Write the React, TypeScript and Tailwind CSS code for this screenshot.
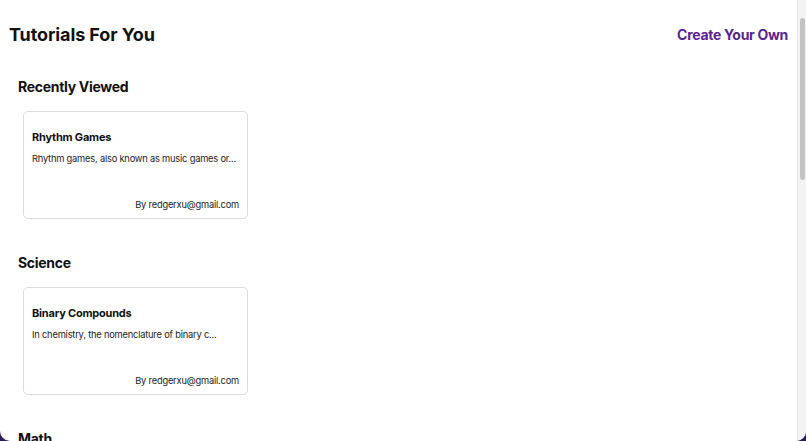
import React from 'react';

interface Tutorial {
  title: string;
  summary: string;
  author: string;
}

const sections: { name: string; items: Tutorial[] }[] = [
  {
    name: 'Recently Viewed',
    items: [
      {
        title: 'Rhythm Games',
        summary: 'Rhythm games, also known as music games or rhythm action games, are a genre of music-themed video games',
        author: 'redgerxu@gmail.com',
      },
    ],
  },
  {
    name: 'Science',
    items: [
      {
        title: 'Binary Compounds',
        summary: 'In chemistry, the nomenclature of binary compounds follows a set of rules',
        author: 'redgerxu@gmail.com',
      },
    ],
  },
  {
    name: 'Math',
    items: [
      {
        title: 'Quadratic Equations',
        summary: 'A quadratic equation is any equation that can be rearranged in standard form',
        author: 'redgerxu@gmail.com',
      },
    ],
  },
];

// previews are cut to a fixed number of characters
const preview = (text: string, max = 42) => (text.length > max ? text.slice(0, max) + '...' : text);

const TutorialCard: React.FC<{ tutorial: Tutorial }> = ({ tutorial }) => (
  <div className="ml-[5px] w-[225px] h-[108px] border-[1.5px] border-[#dcdcdc] rounded-[5px] bg-white px-[8px] pt-[18px] pb-[6.5px] flex flex-col">
    <div className="text-[11px] font-bold leading-[15px] tracking-[-0.2px] text-[#111]">{tutorial.title}</div>
    <div className="mt-[6.5px] text-[9.3px] leading-[14px] tracking-[-0.2px] text-[#222] whitespace-nowrap">
      {preview(tutorial.summary)}
    </div>
    <div className="mt-auto text-right text-[9.3px] leading-[14px] tracking-[-0.2px] text-[#222]">By {tutorial.author}</div>
  </div>
);

export default function App() {
  return (
    <div className="w-[806px] h-[441px] bg-[#2a1b5a] overflow-hidden" style={{ fontFamily: 'Inter, "Noto Sans", sans-serif' }}>
      <div className="h-full bg-white rounded-b-[10px] overflow-hidden flex">
        <div className="flex-1 min-w-0 flex flex-col">
          <div className="h-[3px] bg-[#1d78cc]" />
          <div className="flex items-center justify-between pl-[9px] pr-[9px] pt-[24px] h-[49px]">
            <h1 className="text-[18px] font-bold leading-[22px] tracking-[-0.1px] text-[#111]">Tutorials For You</h1>
            <button className="text-[14px] font-bold leading-[20px] tracking-[-0.3px] text-[#5a2390]">Create Your Own</button>
          </div>
          <div className="px-[18px] pt-[31px] flex flex-col gap-[34px]">
            {sections.map((s) => (
              <section key={s.name} className="flex flex-col gap-[14px]">
                <h2 className="text-[14px] font-bold leading-[20px] tracking-[-0.3px] text-[#111]">{s.name}</h2>
                {s.items.map((t) => (
                  <TutorialCard key={t.title} tutorial={t} />
                ))}
              </section>
            ))}
          </div>
        </div>
        <div className="w-[9px] bg-[#f3f3f3] border-l border-[#e6e6e6] pt-[18px] flex justify-center">
          <div className="w-[5px] h-[162px] rounded-full bg-[#c3c3c3]" />
        </div>
      </div>
    </div>
  );
}
